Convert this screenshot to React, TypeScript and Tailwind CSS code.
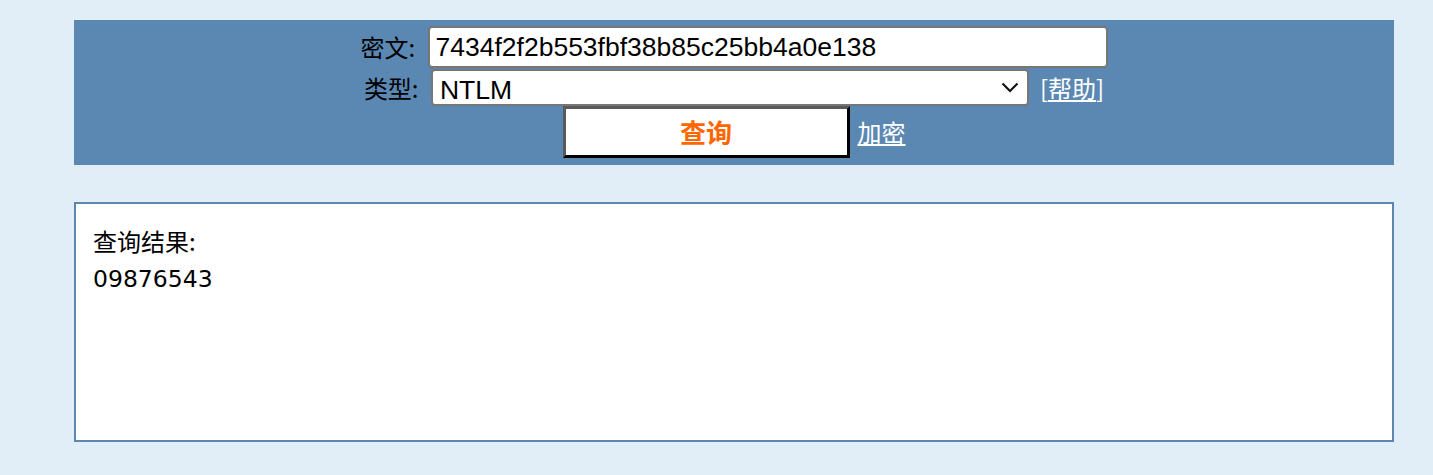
import React from "react";

const cjk = "font-['Noto_Sans_CJK_SC','Noto_Sans',sans-serif]";

export default function App() {
    return (
        <div className="min-h-[475px] w-full bg-[#e1edf7] pt-5 pb-8">
            {/* query panel */}
            <div className={`ml-[74px] w-[1320px] bg-[#5b88b3] pt-[6px] pb-[7px] ${cjk}`}>
                <div className="flex h-[42px] items-center justify-center">
                    <span className="w-[58px] text-[24px] leading-none text-black">密文:</span>
                    <input
                        type="text"
                        defaultValue="7434f2f2b553fbf38b85c25bb4a0e138"
                        className="ml-[9px] h-[42px] w-[680px] rounded-[4px] border-2 border-[#767676] bg-white px-[6px] font-['Liberation_Sans',Arial,sans-serif] text-[26.5px] text-black outline-none"
                    />
                </div>
                <div className="mt-[1px] flex h-[37px] items-center justify-center">
                    <span className="w-[58px] text-[24px] leading-none text-black">类型:</span>
                    <div className="relative ml-[9px]">
                        <select
                            defaultValue="NTLM"
                            className="block h-[37px] w-[598px] appearance-none rounded-[4px] border-2 border-[#767676] bg-white pl-[7px] font-['Liberation_Sans',Arial,sans-serif] text-[26.5px] text-black outline-none"
                        >
                            <option>NTLM</option>
                            <option>MD5</option>
                            <option>SHA1</option>
                        </select>
                        <svg
                            className="pointer-events-none absolute right-[10px] top-[13px]"
                            width="18"
                            height="11"
                            viewBox="0 0 18 11"
                        >
                            <path d="M1.5 1.5 L9 9 L16.5 1.5" fill="none" stroke="#111" strokeWidth="2.2" />
                        </svg>
                    </div>
                    <span className="ml-[11px] text-[24px] leading-none text-white">
                        [<a href="#" className="underline underline-offset-2">帮助</a>]
                    </span>
                </div>
                <div className="flex h-[52px] items-center justify-center">
                    <button
                        type="button"
                        className="h-[52px] w-[287px] border-[3px] border-t-[#5a5a5a] border-l-[#5a5a5a] border-r-black border-b-black bg-white text-[26px] font-bold leading-none text-[#ff6600]"
                    >
                        查询
                    </button>
                    <a href="#" className="ml-[8px] text-[24px] leading-none text-white underline underline-offset-2">加密</a>
                </div>
            </div>

            {/* result */}
            <div className={`mt-[37px] ml-[74px] h-[240px] w-[1320px] border-2 border-[#5b88b3] bg-white px-[17px] pt-[18px] text-[24px] leading-[38px] text-black ${cjk}`}>
                <div>查询结果:</div>
                <div className="font-['DejaVu_Sans',sans-serif] text-[23.5px]">09876543</div>
            </div>
        </div>
    );
}
